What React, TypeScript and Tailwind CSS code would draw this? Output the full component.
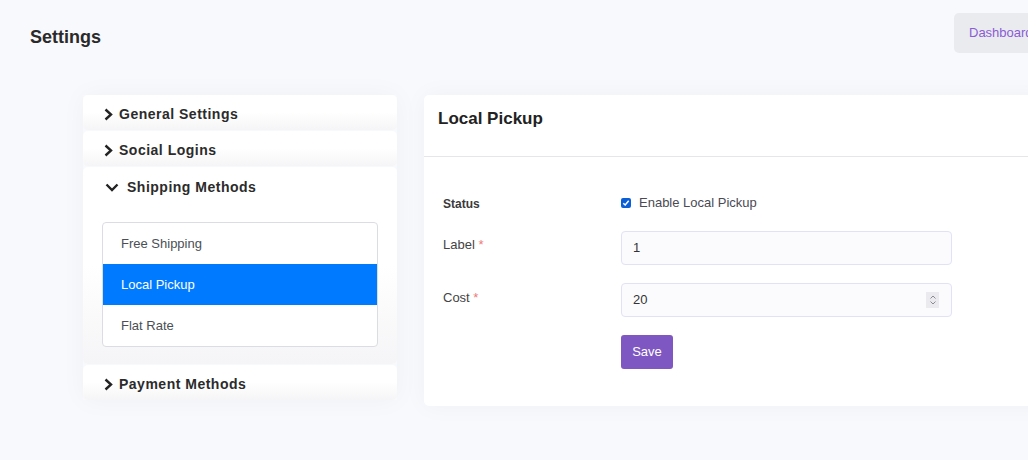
import { useState } from "react";

const sections = ["General Settings", "Social Logins", "Shipping Methods", "Payment Methods"];
const methods = ["Free Shipping", "Local Pickup", "Flat Rate"];

function ChevronRight() {
  return (
    <svg width="9" height="13" viewBox="0 0 9 13" className="shrink-0">
      <polyline points="1.5,1.5 7,6.5 1.5,11.5" fill="none" stroke="#222" strokeWidth="2.4" />
    </svg>
  );
}

function ChevronDown() {
  return (
    <svg width="14" height="9" viewBox="0 0 14 9" className="shrink-0">
      <polyline points="1.5,1.5 7,7 12.5,1.5" fill="none" stroke="#222" strokeWidth="2.4" />
    </svg>
  );
}

export default function App() {
  const [open, setOpen] = useState("Shipping Methods");
  const [active, setActive] = useState("Local Pickup");
  const [enabled, setEnabled] = useState(true);

  return (
    <div className="w-full min-h-[460px] overflow-hidden bg-[#f8f9fc] font-['Liberation_Sans',Arial,sans-serif] text-[#333]">
      <div className="w-[1079px]">
        {/* Header */}
        <div className="flex justify-between items-start px-[30px] pt-[13px]">
          <h1 className="mt-[14px] text-[18px] leading-[21px] font-bold text-[#2a2a2a]">Settings</h1>
          <button className="w-[95px] h-[40px] rounded-[5px] bg-[#e9ebee] text-left pl-[15px] text-[13px] text-[#8a5cd6]">
            Dashboard
          </button>
        </div>

        <div className="flex items-start gap-[27px] pl-[83px] pr-[30px] mt-[42px]">
          {/* Accordion */}
          <div className="w-[314px] flex flex-col gap-px shadow-[0_0_24px_rgba(30,40,90,0.04)]">
            {sections.map((s) => {
              const isOpen = open === s;
              return (
                <div
                  key={s}
                  className="rounded-[5px] bg-linear-to-b from-white from-50% to-[#f5f5f7]"
                >
                  <button
                    onClick={() => setOpen(isOpen ? "" : s)}
                    className={`w-full flex items-center text-left text-[14px] font-bold tracking-[0.5px] text-[#2b2b2b] ${
                      isOpen ? "h-[40px] pl-[22px] gap-[8px]" : "h-[35px] pt-[3px] pl-[21px] gap-[6px]"
                    }`}
                  >
                    {isOpen ? <ChevronDown /> : <ChevronRight />}
                    {s}
                  </button>
                  {isOpen && s === "Shipping Methods" && (
                    <div className="px-[19px] pt-[15px] pb-[17px]">
                      <div className="border border-[#dcdde2] rounded-[4px] overflow-hidden bg-white">
                        {methods.map((m) => (
                          <div
                            key={m}
                            onClick={() => setActive(m)}
                            className={`h-[41px] flex items-center pl-[18px] text-[13px] cursor-pointer ${
                              active === m ? "bg-[#007bff] text-white" : "text-[#4a4f55]"
                            }`}
                          >
                            {m}
                          </div>
                        ))}
                      </div>
                    </div>
                  )}
                </div>
              );
            })}
          </div>

          {/* Detail panel */}
          <div className="flex-1 bg-white rounded-[5px] shadow-[0_0_24px_rgba(30,40,90,0.04)]">
            <div className="h-[62px] flex items-center pl-[14px] pb-[13px] border-b border-[#e6e6ea]">
              <h2 className="text-[17px] font-bold text-[#222]">{active}</h2>
            </div>

            <div className="pl-[19px] pt-[36px] pb-[37px]">
              <div className="flex items-center h-[20px]">
                <span className="w-[178px] text-[12px] font-bold text-[#3a3a3a] pt-[2px]">Status</span>
                <label className="flex items-center gap-[8px] text-[13px] text-[#4a4a55] cursor-pointer">
                  <span
                    onClick={() => setEnabled(!enabled)}
                    className={`w-[10px] h-[10px] rounded-[2px] flex items-center justify-center ${
                      enabled ? "bg-[#0b5fd6]" : "border border-[#777] bg-white"
                    }`}
                  >
                    {enabled && (
                      <svg width="8" height="8" viewBox="0 0 8 8">
                        <polyline points="1.3,4.2 3.2,6 6.7,1.8" fill="none" stroke="white" strokeWidth="1.5" />
                      </svg>
                    )}
                  </span>
                  Enable {active}
                </label>
              </div>

              <div className="flex items-start mt-[18px]">
                <span className="w-[178px] pt-[4px] text-[13px] text-[#444]">
                  Label <span className="text-[#ee7a7a]">*</span>
                </span>
                <div className="w-[331px] h-[34px] flex items-center px-[11px] rounded-[4px] border border-[#e2e2f7] bg-[#fbfbfe] text-[13px] text-[#333]">
                  1
                </div>
              </div>

              <div className="flex items-start mt-[18px]">
                <span className="w-[178px] pt-[5px] text-[13px] text-[#444]">
                  Cost <span className="text-[#ee7a7a]">*</span>
                </span>
                <div className="w-[331px] h-[34px] flex items-center justify-between pl-[11px] pr-[12px] rounded-[4px] border border-[#e2e2f7] bg-[#fbfbfe] text-[13px] text-[#333]">
                  20
                  <span className="w-[13px] h-[16px] bg-[#ebebef] flex items-center justify-center">
                    <svg width="8" height="12" viewBox="0 0 8 12">
                      <polyline points="1.5,4.5 4,2 6.5,4.5" fill="none" stroke="#8a8a92" strokeWidth="1" />
                      <polyline points="1.5,7.5 4,10 6.5,7.5" fill="none" stroke="#8a8a92" strokeWidth="1" />
                    </svg>
                  </span>
                </div>
              </div>

              <div className="mt-[18px] pl-[178px]">
                <button className="w-[52px] h-[34px] rounded-[3px] bg-[#7e57c2] text-white text-[13px]">Save</button>
              </div>
            </div>
          </div>
        </div>
      </div>
    </div>
  );
}
